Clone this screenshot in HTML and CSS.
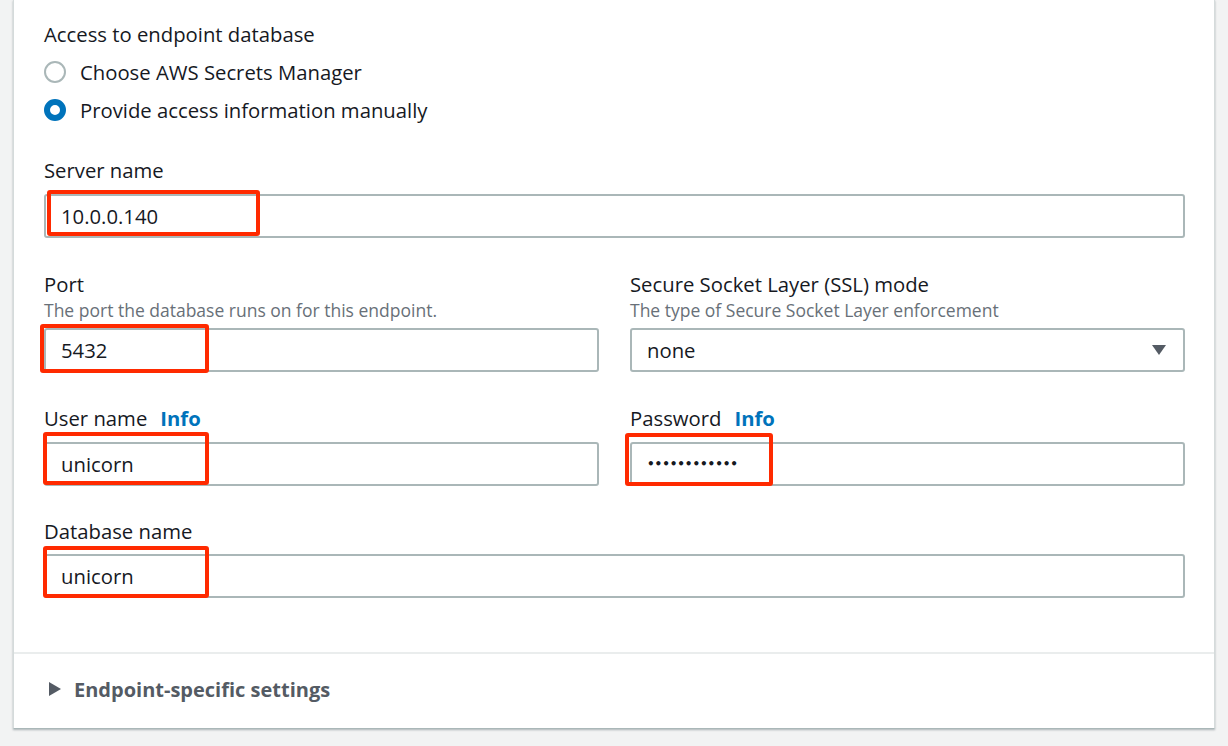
FILE: index.html
```html
<!DOCTYPE html>
<html>
<head>
<meta charset="utf-8">
<link rel="stylesheet" href="styles.css">
</head>
<body>
<div class="card">
  <div class="card-body">
    <div class="group">
      <div class="label">Access to endpoint database</div>
      <div class="radios">
        <div class="radio-row"><span class="radio"></span><span class="radio-text">Choose AWS Secrets Manager</span></div>
        <div class="radio-row"><span class="radio checked"></span><span class="radio-text">Provide access information manually</span></div>
      </div>
    </div>

    <div class="field full server">
      <div class="label">Server name</div>
      <div class="input-wrap">
        <div class="input">10.0.0.140</div>
        <span class="mark mark-server"></span>
      </div>
    </div>

    <div class="grid">
      <div class="field">
        <div class="label">Port</div>
        <div class="desc">The port the database runs on for this endpoint.</div>
        <div class="input-wrap">
          <div class="input">5432</div>
          <span class="mark mark-port"></span>
        </div>
      </div>
      <div class="field">
        <div class="label">Secure Socket Layer (SSL) mode</div>
        <div class="desc">The type of Secure Socket Layer enforcement</div>
        <div class="input select">
          <span>none</span>
          <svg class="caret" width="16" height="12" viewBox="0 0 16 12"><polygon points="1,1 15,1 8,11" fill="#545b64"/></svg>
        </div>
      </div>
      <div class="field">
        <div class="label">User name<a class="info">Info</a></div>
        <div class="input-wrap">
          <div class="input">unicorn</div>
          <span class="mark mark-user"></span>
        </div>
      </div>
      <div class="field">
        <div class="label">Password<a class="info">Info</a></div>
        <div class="input-wrap">
          <div class="input"><span class="dots">••••••••••••</span></div>
          <span class="mark mark-pass"></span>
        </div>
      </div>
    </div>

    <div class="field full">
      <div class="label">Database name</div>
      <div class="input-wrap">
        <div class="input">unicorn</div>
        <span class="mark mark-db"></span>
      </div>
    </div>
  </div>
  <div class="card-footer">
    <svg class="expand" width="14" height="16" viewBox="0 0 14 16"><polygon points="1,1 13,8 1,15" fill="#545b64"/></svg>
    <span class="footer-text">Endpoint-specific settings</span>
  </div>
</div>
</body>
</html>
```

FILE: styles.css
```css
* { box-sizing: border-box; }
html, body { margin: 0; padding: 0; }
body {
  background: #f2f3f3;
  font-family: "Open Sans", "Noto Sans", sans-serif;
  color: #16191f;
  font-size: 20.3px;
  width: 1228px;
  height: 746px;
  overflow: hidden;
}
.card {
  margin-left: 13px;
  width: 1202px;
  background: #fff;
  border-left: 1px solid #d5dbdb;
  border-right: 1px solid #d5dbdb;
  border-bottom: 1px solid #aab7b8;
  box-shadow: 0 1px 2px rgba(0,28,36,0.3);
}
.card-body {
  padding: 21px 29px 54px 30px;
  border-bottom: 2px solid #eaeded;
}
.label {
  line-height: 26px;
  font-size: 20.3px;
  color: #16191f;
  display: flex;
  align-items: center;
}
.radios { margin-top: 12px; display: flex; flex-direction: column; gap: 12px; }
.radio-row { display: flex; align-items: center; height: 26px; }
.radio {
  width: 22px; height: 22px; border-radius: 50%;
  border: 2px solid #aab7b8;
  margin: 0 14px 0 0;
  flex: none;
  background: #fff;
}
.radio.checked {
  border: 6px solid #0073bb;
}
.radio-text { line-height: 26px; }
.field.server { margin-top: 34px; }
.field.full .input-wrap { margin-top: 11px; }
.input-wrap { position: relative; }
.input {
  height: 44px;
  border: 2px solid #aab7b8;
  border-radius: 3px;
  padding: 0 15px;
  display: flex;
  align-items: center;
  font-size: 20.3px;
  color: #16191f;
}
.dots {
  font-family: "DejaVu Sans", sans-serif;
  font-size: 12px;
  font-weight: 700;
  letter-spacing: -0.1px;
  line-height: 1;
}
.grid {
  display: grid;
  grid-template-columns: 555px 555px;
  column-gap: 31px;
  row-gap: 33px;
  margin-top: 33px;
}
.desc {
  font-size: 17.5px;
  color: #687078;
  line-height: 24px;
  margin: 1px 0 6px;
}
.grid .field .label + .input-wrap { margin-top: 11px; }
.select { justify-content: space-between; padding-right: 16px; }
.info {
  color: #0073bb;
  font-weight: 700;
  margin-left: 13px;
}
.field.full:last-child { margin-top: 32px; }
.field.full:last-child .input-wrap { margin-top: 10px; }
.mark {
  position: absolute;
  border: 4px solid #ff2a00;
  border-radius: 3px;
}
.mark-server { left: 3px; top: -4px; width: 213px; height: 46px; }
.mark-port { left: -4px; top: -4px; width: 169px; height: 49px; }
.mark-user { left: -1px; top: -10px; width: 166px; height: 53px; }
.mark-pass { left: -5px; top: -9px; width: 148px; height: 53px; }
.mark-db { left: -1px; top: -8px; width: 166px; height: 52px; }
.card-footer {
  height: 74px;
  display: flex;
  align-items: center;
  padding-left: 34px;
  padding-bottom: 4px;
}
.expand { margin-right: 12px; }
.footer-text {
  font-weight: 700;
  color: #545b64;
  font-size: 20px;
}
```
